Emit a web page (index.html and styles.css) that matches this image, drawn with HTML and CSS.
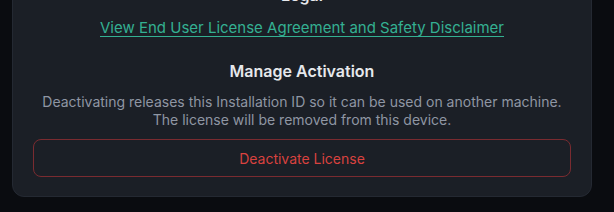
FILE: index.html
```html
<html>
  <head>
    <link rel="stylesheet" href="styles.css">
    <title>License</title>
  </head>
  <body>
    <div class="page">
      <div class="card">
        <div class="section">
          <h3 class="section-title">Legal</h3>
          <a href="#" class="link">View End User License Agreement and Safety Disclaimer</a>
        </div>
        <div class="section">
          <h3 class="section-title">Manage Activation</h3>
          <p class="hint">Deactivating releases this Installation ID so it can be used on another machine.<br>The license will be removed from this device.</p>
          <button class="btn-danger">Deactivate License</button>
        </div>
      </div>
    </div>
  </body>
</html>
```

FILE: styles.css
```css
html, body{
  margin: 0;
  padding: 0;
  background: #0a0c10;
}
.page{
  height: 212px;
  overflow: hidden;
  display: flex;
  flex-direction: column;
  justify-content: flex-end;
  padding: 0 22px 15px 12px;
  box-sizing: border-box;
  font-family: Inter, "Noto Sans", sans-serif;
}
.card{
  background: #1b1f26;
  border: 1px solid #242932;
  border-radius: 12px;
  padding: 0 20px 19px 20px;
  text-align: center;
}
.section{
  display: flex;
  flex-direction: column;
  align-items: center;
}
.section + .section{
  margin-top: 21px;
}
.section-title{
  margin: 0 0 10px 0;
  font-size: 16px;
  line-height: 24px;
  font-weight: 600;
  color: #e6e8ec;
}
.section .link{
  margin-top: 1px;
  font-size: 15px;
  line-height: 20px;
  color: #34b092;
  text-decoration: underline;
  text-underline-offset: 3px;
}
.hint{
  margin: 0 0 11px 0;
  font-size: 14px;
  line-height: 17.5px;
  color: #8f96a3;
}
.btn-danger{
  width: 100%;
  height: 38px;
  background: transparent;
  border: 1px solid #7a2b30;
  border-radius: 8px;
  color: #d9423f;
  font-family: inherit;
  font-size: 14px;
  cursor: pointer;
}
```
